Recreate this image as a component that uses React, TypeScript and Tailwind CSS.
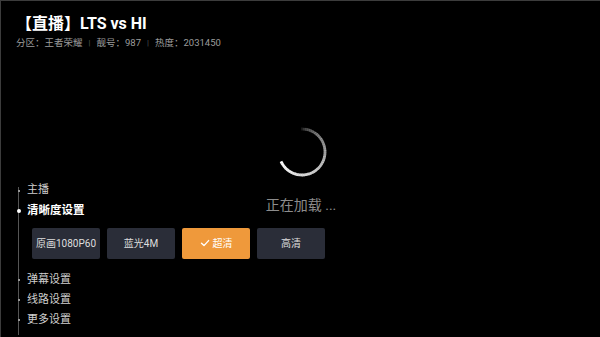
import React from "react";

const FONT = { fontFamily: '"Roboto", "Noto Sans CJK SC", sans-serif' };

function Spinner() {
  const cx = 30;
  const cy = 30;
  const r = 23;
  const start = -92;
  const end = 155;
  const n = 48;
  const segs = [];
  for (let i = 0; i < n; i++) {
    const a0 = ((start + ((end - start) * i) / n) * Math.PI) / 180;
    const a1 = ((start + ((end - start) * (i + 1.15)) / n) * Math.PI) / 180;
    const x0 = cx + r * Math.cos(a0);
    const y0 = cy + r * Math.sin(a0);
    const x1 = cx + r * Math.cos(a1);
    const y1 = cy + r * Math.sin(a1);
    const op = 0.12 + 0.88 * Math.pow(i / (n - 1), 0.6);
    segs.push(
      <path
        key={i}
        d={`M${x0.toFixed(2)} ${y0.toFixed(2)} A${r} ${r} 0 0 1 ${x1.toFixed(2)} ${y1.toFixed(2)}`}
        stroke="#ffffff"
        strokeOpacity={op}
        strokeWidth={2.8}
        fill="none"
      />
    );
  }
  return (
    <svg width="60" height="60" viewBox="0 0 60 60">
      {segs}
    </svg>
  );
}

function Check() {
  return (
    <svg width="10" height="10" viewBox="0 0 10 10" className="mr-[3px]">
      <path d="M1.5 5.2 L4 7.6 L8.6 2.6" stroke="#fff" strokeWidth="1.4" fill="none" strokeLinecap="round" strokeLinejoin="round" />
    </svg>
  );
}

export default function App() {
  const buttons = [
    { label: "原画1080P60", active: false },
    { label: "蓝光4M", active: false },
    { label: "超清", active: true },
    { label: "高清", active: false },
  ];
  return (
    <div
      className="relative w-[600px] h-[337px] bg-black border-t border-l border-[#3c3c3c] overflow-hidden flex flex-col"
      style={FONT}
    >
      <div className="pl-[15px] pt-[12px]">
        <div className="text-[16px] leading-[22px] font-bold text-white">【直播】LTS vs HI</div>
        <div className="mt-[1px] flex items-center text-[9.5px] leading-[14px] text-[#9c9c9c]">
          <span>分区：王者荣耀</span>
          <span className="mx-[6px] text-[#555] text-[8px]">|</span>
          <span>靓号：987</span>
          <span className="mx-[6px] text-[#555] text-[8px]">|</span>
          <span>热度：2031450</span>
        </div>
      </div>

      <div className="absolute left-[271px] top-[121px]">
        <Spinner />
      </div>
      <div className="absolute left-0 w-[600px] top-[194px] text-center text-[14px] leading-[20px] text-[#8c8c8c]">
        正在加载 ...
      </div>

      <div className="relative mt-auto pb-[7px] pl-[26px]">
        <div className="absolute left-[17px] top-[6px] bottom-[2px] w-px bg-[#555]" />
        <div className="relative h-[20px] flex items-center text-[11px] text-[#cfcfcf]">
          <span className="absolute left-[-9.5px] w-[2px] h-[2px] bg-[#999]" />
          主播
        </div>
        <div className="relative h-[20px] flex items-center text-[11.5px] font-bold text-white">
          <span className="absolute left-[-10.5px] w-[4px] h-[4px] rounded-full bg-white" />
          清晰度设置
        </div>
        <div className="mt-[7px] ml-[5px] flex gap-[7px]">
          {buttons.map((b) => (
            <div
              key={b.label}
              className={`w-[68px] h-[31px] rounded-[2px] flex items-center justify-center text-[10px] ${
                b.active ? "bg-[#ef993b] text-white" : "bg-[#2a2d38] text-[#dedede]"
              }`}
            >
              {b.active && <Check />}
              {b.label}
            </div>
          ))}
        </div>
        <div className="mt-[11.5px] relative h-[20px] flex items-center text-[11px] text-[#cfcfcf]">
          <span className="absolute left-[-9.5px] w-[2px] h-[2px] bg-[#999]" />
          弹幕设置
        </div>
        <div className="relative h-[20px] flex items-center text-[11px] text-[#cfcfcf]">
          <span className="absolute left-[-9.5px] w-[2px] h-[2px] bg-[#999]" />
          线路设置
        </div>
        <div className="relative h-[20px] flex items-center text-[11px] text-[#cfcfcf]">
          <span className="absolute left-[-9.5px] w-[2px] h-[2px] bg-[#999]" />
          更多设置
        </div>
      </div>
    </div>
  );
}
